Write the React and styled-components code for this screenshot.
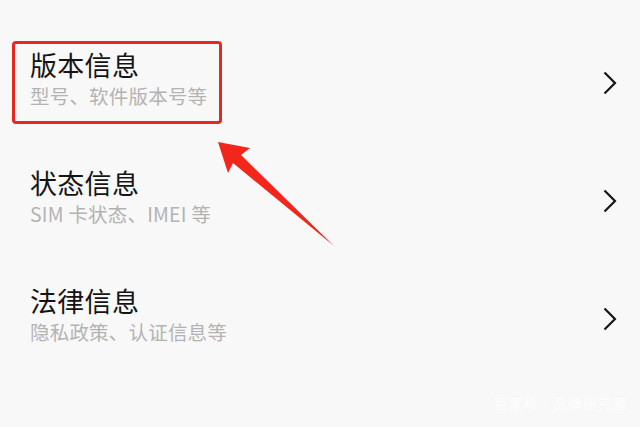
import React from 'react';
import styled, { createGlobalStyle } from 'styled-components';

const GlobalStyle = createGlobalStyle`
    html, body {
        margin: 0;
        padding: 0;
        background: #f8f8f8;
    }
    body {
        font-family: "Noto Sans CJK SC", "Noto Sans", sans-serif;
    }
`;

const Page = styled.div`
    position: relative;
    width: 640px;
    height: 427px;
    overflow: hidden;
    background: #f8f8f8;
    box-sizing: border-box;
    padding: 41px 23px 0 12px;
`;

const List = styled.div`
    display: flex;
    flex-direction: column;
    gap: 35px;
`;

const Row = styled.div`
    display: flex;
    align-items: center;
    justify-content: space-between;
`;

const TextBlock = styled.div`
    display: flex;
    flex-direction: column;
    gap: 2px;
    box-sizing: border-box;
    height: 83px;
    padding: 4px 12px 0 15px;
    border: 3px solid ${props => (props.$highlighted ? '#e8281f' : 'transparent')};
    border-radius: 4px;
`;

const Title = styled.div`
    font-size: 27px;
    line-height: 34px;
    color: #141414;
    letter-spacing: 0.3px;
`;

const Subtitle = styled.div`
    font-size: 19.5px;
    line-height: 24px;
    color: #b3b3b3;
    letter-spacing: 0.2px;
    white-space: nowrap;
`;

const Chevron = styled.svg`
    width: 14px;
    height: 24px;
    flex-shrink: 0;
`;

const Annotation = styled.svg`
    position: absolute;
    left: 0;
    top: 0;
    width: 640px;
    height: 427px;
    pointer-events: none;
`;

const Watermark = styled.div`
    position: absolute;
    right: 12px;
    bottom: 14px;
    font-size: 14px;
    color: #ffffff;
    opacity: 0.9;
    letter-spacing: 1px;
`;

const items = [
    { title: '版本信息', sub: '型号、软件版本号等', highlighted: true },
    { title: '状态信息', sub: 'SIM 卡状态、IMEI 等' },
    { title: '法律信息', sub: '隐私政策、认证信息等' },
];

export default function App() {
    return (
        <>
            <GlobalStyle />
            <Page>
                <List>
                    {items.map(item => (
                        <Row key={item.title}>
                            <TextBlock $highlighted={item.highlighted}>
                                <Title>{item.title}</Title>
                                <Subtitle>{item.sub}</Subtitle>
                            </TextBlock>
                            <Chevron viewBox="0 0 14 24">
                                <polyline points="1.5,1.5 12,12 1.5,22.5" fill="none" stroke="#151515" strokeWidth="2.2" />
                            </Chevron>
                        </Row>
                    ))}
                </List>
                <Annotation viewBox="0 0 640 427">
                    <polygon
                        points="218,142 250,148 241,155 334,246 233,163 228,173"
                        fill="#f2261b"
                    />
                </Annotation>
                <Watermark>百家号 / 品牌研究室</Watermark>
            </Page>
        </>
    );
}
